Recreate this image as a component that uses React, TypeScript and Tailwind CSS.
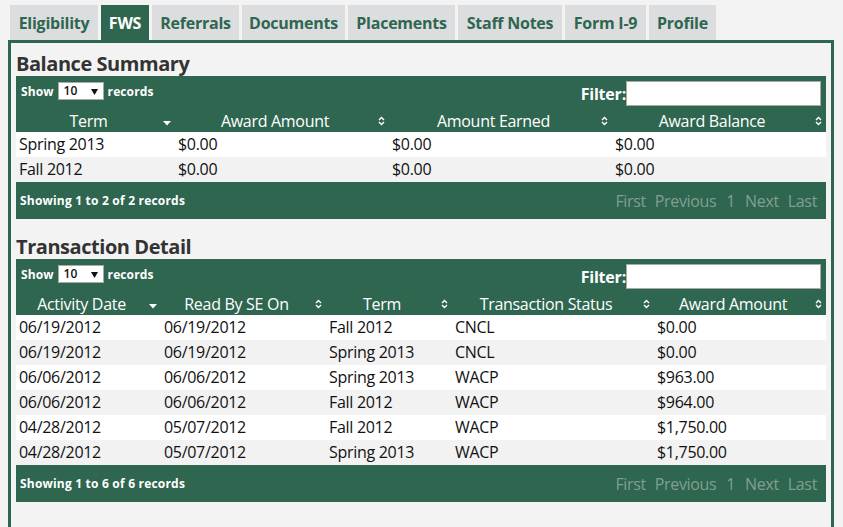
import React from "react";

const GREEN = "bg-[#2f6650]";

function SortDown() {
  return (
    <svg width="8" height="5" viewBox="0 0 8 5" className="block">
      <polygon points="0,0 8,0 4,4.5" fill="#ffffff" />
    </svg>
  );
}

function SortBoth() {
  return (
    <svg width="7" height="10" viewBox="0 0 7 10" className="block">
      <polyline points="1,4 3.5,1.5 6,4" fill="none" stroke="#ffffff" strokeWidth="1.4" />
      <polyline points="1,6 3.5,8.5 6,6" fill="none" stroke="#ffffff" strokeWidth="1.4" />
    </svg>
  );
}

function Toolbar() {
  return (
    <div className="flex h-[34px] justify-between pl-[5px] pr-[5px]">
      <div className="mt-[6px] flex h-[18px] items-center text-[12px] font-bold tracking-[0.1px] text-white">
        <span className="pt-[1px]">Show</span>
        <div className="mx-[4px] flex h-[18px] w-[46px] items-center justify-between border border-[#a9a9a9] bg-white pl-[5px] pr-[5px] text-[12px] font-semibold text-[#111]">
          <span>10</span>
          <svg width="7" height="7" viewBox="0 0 7 7" className="block">
            <polygon points="0,1 7,1 3.5,7" fill="#111" />
          </svg>
        </div>
        <span className="pt-[1px]">records</span>
      </div>
      <div className="mt-[5px] flex h-[25px] items-center">
        <span className="text-[16px] font-bold tracking-[-0.2px] text-white">Filter:</span>
        <div className="h-[25px] w-[195px] border border-[#a9a9a9] bg-white" />
      </div>
    </div>
  );
}

type Col = { label: string; w: number; sort: "down" | "both" };

function HeaderRow({ cols }: { cols: Col[] }) {
  return (
    <div className="flex h-[22px]">
      {cols.map((c) => (
        <div key={c.label} className="relative h-[22px] shrink-0 pl-[4px] pr-[18px] text-center text-[16px] leading-[22px] tracking-[-0.3px] text-white" style={{ width: c.w }}>
          {c.label}
          <div className="absolute right-[4px] top-[6px]">
            {c.sort === "down" ? <div className="pt-[5px]"><SortDown /></div> : <SortBoth />}
          </div>
        </div>
      ))}
    </div>
  );
}

function Body({ cols, rows }: { cols: Col[]; rows: string[][] }) {
  return (
    <div>
      {rows.map((r, i) => (
        <div key={i} className={`flex h-[25px] ${i % 2 === 0 ? "bg-white" : "bg-[#f2f2f2]"}`}>
          {r.map((cell, j) => (
            <div key={j} className="shrink-0 pl-[3px] text-[16px] leading-[25px] tracking-[-0.3px] text-[#111]" style={{ width: cols[j].w }}>
              {cell}
            </div>
          ))}
        </div>
      ))}
    </div>
  );
}

function Footer({ text }: { text: string }) {
  return (
    <div className={`flex h-[37px] items-center justify-between ${GREEN} pl-[4px] pr-[9px]`}>
      <span className="text-[12px] font-bold leading-[16px] tracking-[0.2px] text-white">{text}</span>
      <div className="flex gap-[9px] text-[16px] leading-[22px] tracking-[-0.35px] text-[#7fa091]">
        <span>First</span>
        <span>Previous</span>
        <span className="px-[1px]">1</span>
        <span>Next</span>
        <span>Last</span>
      </div>
    </div>
  );
}

function DataTable({ cols, rows, footer }: { cols: Col[]; rows: string[][]; footer: string }) {
  return (
    <div className="w-[810px]">
      <div className={GREEN}>
        <Toolbar />
        <HeaderRow cols={cols} />
      </div>
      <Body cols={cols} rows={rows} />
      <Footer text={footer} />
    </div>
  );
}

const tabs: { label: string; w: number; active?: boolean }[] = [
  { label: "Eligibility", w: 88 },
  { label: "FWS", w: 48, active: true },
  { label: "Referrals", w: 87 },
  { label: "Documents", w: 103 },
  { label: "Placements", w: 107 },
  { label: "Staff Notes", w: 104 },
  { label: "Form I-9", w: 81 },
  { label: "Profile", w: 67 },
];

const cols1: Col[] = [
  { label: "Term", w: 159, sort: "down" },
  { label: "Award Amount", w: 214, sort: "both" },
  { label: "Amount Earned", w: 223, sort: "both" },
  { label: "Award Balance", w: 214, sort: "both" },
];

const rows1 = [
  ["Spring 2013", "$0.00", "$0.00", "$0.00"],
  ["Fall 2012", "$0.00", "$0.00", "$0.00"],
];

const cols2: Col[] = [
  { label: "Activity Date", w: 145, sort: "down" },
  { label: "Read By SE On", w: 165, sort: "both" },
  { label: "Term", w: 126, sort: "both" },
  { label: "Transaction Status", w: 202, sort: "both" },
  { label: "Award Amount", w: 172, sort: "both" },
];

const rows2 = [
  ["06/19/2012", "06/19/2012", "Fall 2012", "CNCL", "$0.00"],
  ["06/19/2012", "06/19/2012", "Spring 2013", "CNCL", "$0.00"],
  ["06/06/2012", "06/06/2012", "Spring 2013", "WACP", "$963.00"],
  ["06/06/2012", "06/06/2012", "Fall 2012", "WACP", "$964.00"],
  ["04/28/2012", "05/07/2012", "Fall 2012", "WACP", "$1,750.00"],
  ["04/28/2012", "05/07/2012", "Spring 2013", "WACP", "$1,750.00"],
];

export default function App() {
  return (
    <div className="h-[527px] w-[843px] overflow-hidden bg-[#f3f3f3]" style={{ fontFamily: '"Open Sans", "Noto Sans", sans-serif' }}>
      <div className="flex gap-[3px] pl-[10px] pt-[5px]">
        {tabs.map((t) => (
          <div
            key={t.label}
            className={`flex h-[35px] shrink-0 items-center justify-center text-[16px] font-bold tracking-[-0.25px] ${t.active ? "bg-[#2f6650] text-white" : "bg-[#dcdddf] text-[#2f6650]"}`}
            style={{ width: t.w }}
          >
            {t.label}
          </div>
        ))}
      </div>
      <div className="ml-[8px] h-[600px] w-[826px] border-[3px] border-[#2f6650] px-[5px] pt-[9px]">
        <h2 className="text-[20px] font-bold leading-[24px] tracking-[-0.45px] text-[#333]">Balance Summary</h2>
        <DataTable cols={cols1} rows={rows1} footer="Showing 1 to 2 of 2 records" />
        <h2 className="mt-[16px] text-[20px] font-bold leading-[24px] tracking-[-0.45px] text-[#333]">Transaction Detail</h2>
        <DataTable cols={cols2} rows={rows2} footer="Showing 1 to 6 of 6 records" />
      </div>
    </div>
  );
}
